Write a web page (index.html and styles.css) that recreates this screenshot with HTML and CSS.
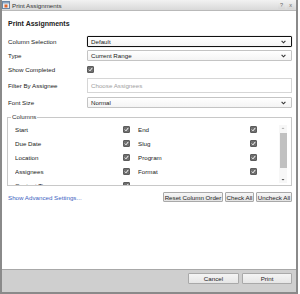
FILE: index.html
```html
<!DOCTYPE html>
<html>
<head>
  <meta charset="UTF-8">
  <title>Print Assignments</title>
  <link rel="stylesheet" href="styles.css">
</head>
<body>
  <div class="dialog">
    <div class="titlebar">
      <span class="app-icon">
        <svg width="8" height="8" viewBox="0 0 8 8">
          <rect x="0.5" y="0.5" width="7" height="7" fill="#e9eef4" stroke="#6c86a3"/>
          <rect x="1" y="1" width="6" height="1.5" fill="#8aa3c0"/>
          <rect x="2.5" y="3.5" width="3" height="3" fill="#e2652a"/>
        </svg>
      </span>
      <span class="title">Print Assignments</span>
      <span class="tb-btn">?</span>
      <span class="tb-btn">x</span>
    </div>

    <div class="body">
      <h1>Print Assignments</h1>

      <div class="form">
        <div class="row">
          <label>Column Selection</label>
          <div class="select focused">
            <span>Default</span>
            <svg class="chevron" width="5" height="4" viewBox="0 0 5 4"><path d="M0.6 0.8 L2.5 2.8 L4.4 0.8" fill="none" stroke="#333" stroke-width="1.1"/></svg>
          </div>
        </div>
        <div class="row">
          <label>Type</label>
          <div class="select">
            <span>Current Range</span>
            <svg class="chevron" width="5" height="4" viewBox="0 0 5 4"><path d="M0.6 0.8 L2.5 2.8 L4.4 0.8" fill="none" stroke="#333" stroke-width="1.1"/></svg>
          </div>
        </div>
        <div class="row">
          <label>Show Completed</label>
          <span class="check"><svg width="5" height="5" viewBox="0 0 5 5"><path d="M0.8 2.6 L2 3.8 L4.3 0.9" fill="none" stroke="#fff" stroke-width="1"/></svg></span>
        </div>
        <div class="row tall">
          <label>Filter By Assignee</label>
          <div class="input">Choose Assignees</div>
        </div>
        <div class="row last">
          <label>Font Size</label>
          <div class="select">
            <span>Normal</span>
            <svg class="chevron" width="5" height="4" viewBox="0 0 5 4"><path d="M0.6 0.8 L2.5 2.8 L4.4 0.8" fill="none" stroke="#333" stroke-width="1.1"/></svg>
          </div>
        </div>
      </div>

      <fieldset class="columns">
        <legend>Columns</legend>
        <div class="columns-inner">
          <div class="column-list">
            <span>Start</span><span class="check"><svg width="5" height="5" viewBox="0 0 5 5"><path d="M0.8 2.6 L2 3.8 L4.3 0.9" fill="none" stroke="#fff" stroke-width="1"/></svg></span>
            <span>End</span><span class="check"><svg width="5" height="5" viewBox="0 0 5 5"><path d="M0.8 2.6 L2 3.8 L4.3 0.9" fill="none" stroke="#fff" stroke-width="1"/></svg></span>
            <span>Due Date</span><span class="check"><svg width="5" height="5" viewBox="0 0 5 5"><path d="M0.8 2.6 L2 3.8 L4.3 0.9" fill="none" stroke="#fff" stroke-width="1"/></svg></span>
            <span>Slug</span><span class="check"><svg width="5" height="5" viewBox="0 0 5 5"><path d="M0.8 2.6 L2 3.8 L4.3 0.9" fill="none" stroke="#fff" stroke-width="1"/></svg></span>
            <span>Location</span><span class="check"><svg width="5" height="5" viewBox="0 0 5 5"><path d="M0.8 2.6 L2 3.8 L4.3 0.9" fill="none" stroke="#fff" stroke-width="1"/></svg></span>
            <span>Program</span><span class="check"><svg width="5" height="5" viewBox="0 0 5 5"><path d="M0.8 2.6 L2 3.8 L4.3 0.9" fill="none" stroke="#fff" stroke-width="1"/></svg></span>
            <span>Assignees</span><span class="check"><svg width="5" height="5" viewBox="0 0 5 5"><path d="M0.8 2.6 L2 3.8 L4.3 0.9" fill="none" stroke="#fff" stroke-width="1"/></svg></span>
            <span>Format</span><span class="check"><svg width="5" height="5" viewBox="0 0 5 5"><path d="M0.8 2.6 L2 3.8 L4.3 0.9" fill="none" stroke="#fff" stroke-width="1"/></svg></span>
            <span>Content Time</span><span class="check"><svg width="5" height="5" viewBox="0 0 5 5"><path d="M0.8 2.6 L2 3.8 L4.3 0.9" fill="none" stroke="#fff" stroke-width="1"/></svg></span>
          </div>
          <div class="scrollbar">
            <svg width="8" height="6" viewBox="0 0 8 6"><path d="M2.5 4 L4 2.5 L5.5 4 Z" fill="#b0b0b0"/></svg>
            <div class="thumb"></div>
            <svg width="8" height="6" viewBox="0 0 8 6"><path d="M2.5 2 L4 3.5 L5.5 2 Z" fill="#505050"/></svg>
          </div>
        </div>
      </fieldset>

      <div class="actions">
        <a class="advanced" href="#">Show Advanced Settings...</a>
        <div class="action-buttons">
          <button class="btn reset">Reset Column Order</button>
          <button class="btn check-all">Check All</button>
          <button class="btn uncheck-all">Uncheck All</button>
        </div>
      </div>
    </div>

    <div class="footer">
      <button class="btn cancel">Cancel</button>
      <button class="btn print">Print</button>
    </div>
  </div>
</body>
</html>
```

FILE: styles.css
```css
body {
  margin: 0;
  background-color: #fff;
  font-family: 'Liberation Sans', Arial, sans-serif;
  font-size: 6.2px;
  color: #222;
}

.dialog {
  width: 298px;
  height: 294px;
  box-sizing: border-box;
  border: 2px solid #8a8a8a;
  border-top: none;
  display: flex;
  flex-direction: column;
  background-color: #fff;
}

/* Заголовок окна */
.titlebar {
  height: 10px;
  border-bottom: 1px solid #b9b9b9;
  background: linear-gradient(to bottom, #f2f2f2, #d9d9d9);
  display: flex;
  align-items: center;
  padding-right: 2px;
}

.app-icon {
  display: flex;
  margin-left: 0;
  margin-right: 2px;
}

.title {
  flex: 1;
  color: #333;
}

.tb-btn {
  width: 7px;
  height: 7px;
  margin-left: 2px;
  display: flex;
  align-items: center;
  justify-content: center;
  font-size: 5.5px;
  color: #666;
  background: linear-gradient(to bottom, #eee, #d6d6d6);
  border-radius: 1px;
}

.body {
  flex: 1;
  padding: 8px 4px 0 6px;
}

h1 {
  margin: 0 0 7px 0;
  font-size: 7px;
  line-height: 10px;
  font-weight: bold;
  color: #222;
}

.row {
  display: grid;
  grid-template-columns: 79px 1fr;
  align-items: center;
  height: 11px;
  margin-bottom: 3px;
}

.row.tall {
  height: 15px;
  margin-bottom: 4px;
}

.row.last {
  margin-bottom: 5px;
}

.select {
  height: 11px;
  box-sizing: border-box;
  border: 1px solid #c4c4c4;
  border-radius: 1px;
  background: linear-gradient(to bottom, #fff, #f4f4f4);
  display: flex;
  align-items: center;
  justify-content: space-between;
  padding: 0 5px 0 3px;
}

.select.focused {
  border-color: #111;
  box-shadow: 0 0 1px rgba(0, 0, 0, 0.5);
}

.input {
  height: 15px;
  box-sizing: border-box;
  border: 1px solid #d6d6d6;
  display: flex;
  align-items: center;
  padding-left: 3px;
  color: #a0a0a0;
}

.check {
  width: 7px;
  height: 7px;
  box-sizing: border-box;
  background-color: #6f6f6f;
  border: 1px solid #5c5c5c;
  border-radius: 1px;
  display: flex;
  align-items: center;
  justify-content: center;
}

/* Блок колонок */
.columns {
  margin: 0 0 0 -1px;
  padding: 1px 4px 0 7px;
  border: 1px solid #c8c8c8;
  min-width: 0;
}

.columns legend {
  padding: 0 1px;
  margin-left: -4px;
  line-height: 8px;
  color: #333;
}

.columns-inner {
  display: flex;
  height: 63px;
}

.column-list {
  flex: 1;
  overflow: hidden;
  display: grid;
  grid-template-columns: 108px 15px 112px 7px;
  grid-auto-rows: 14px;
  align-items: center;
}

.scrollbar {
  width: 8px;
  margin: 3px 0 2px 0;
  display: flex;
  flex-direction: column;
  align-items: center;
  background-color: #f7f7f7;
}

.scrollbar .thumb {
  width: 7px;
  height: 35px;
  margin: 2px 0 auto 0;
  background-color: #c1c1c1;
}

.actions {
  margin-top: 6px;
  display: flex;
  align-items: center;
  justify-content: space-between;
}

.advanced {
  color: #3d5fc2;
  text-decoration: none;
}

.action-buttons {
  display: flex;
  gap: 2px;
}

.btn {
  height: 10px;
  padding: 0;
  font-family: 'Liberation Sans', Arial, sans-serif;
  font-size: 6.2px;
  color: #222;
  border: 1px solid #a9a9a9;
  border-radius: 1px;
  background: linear-gradient(to bottom, #f6f6f6, #e4e4e4);
}

.btn.reset {
  width: 60px;
}

.btn.check-all {
  width: 29px;
}

.btn.uncheck-all {
  width: 36px;
}

.footer {
  height: 19px;
  border-top: 1px solid #a8a8a8;
  background-color: #cfcfcf;
  display: flex;
  justify-content: flex-end;
  align-items: flex-start;
  gap: 3px;
  padding: 3px 4px 0 0;
  box-sizing: content-box;
}

.footer .btn {
  height: 11px;
  background: linear-gradient(to bottom, #f4f4f4, #e6e6e6);
}

.btn.cancel {
  width: 51px;
}

.btn.print {
  width: 50px;
}
```
